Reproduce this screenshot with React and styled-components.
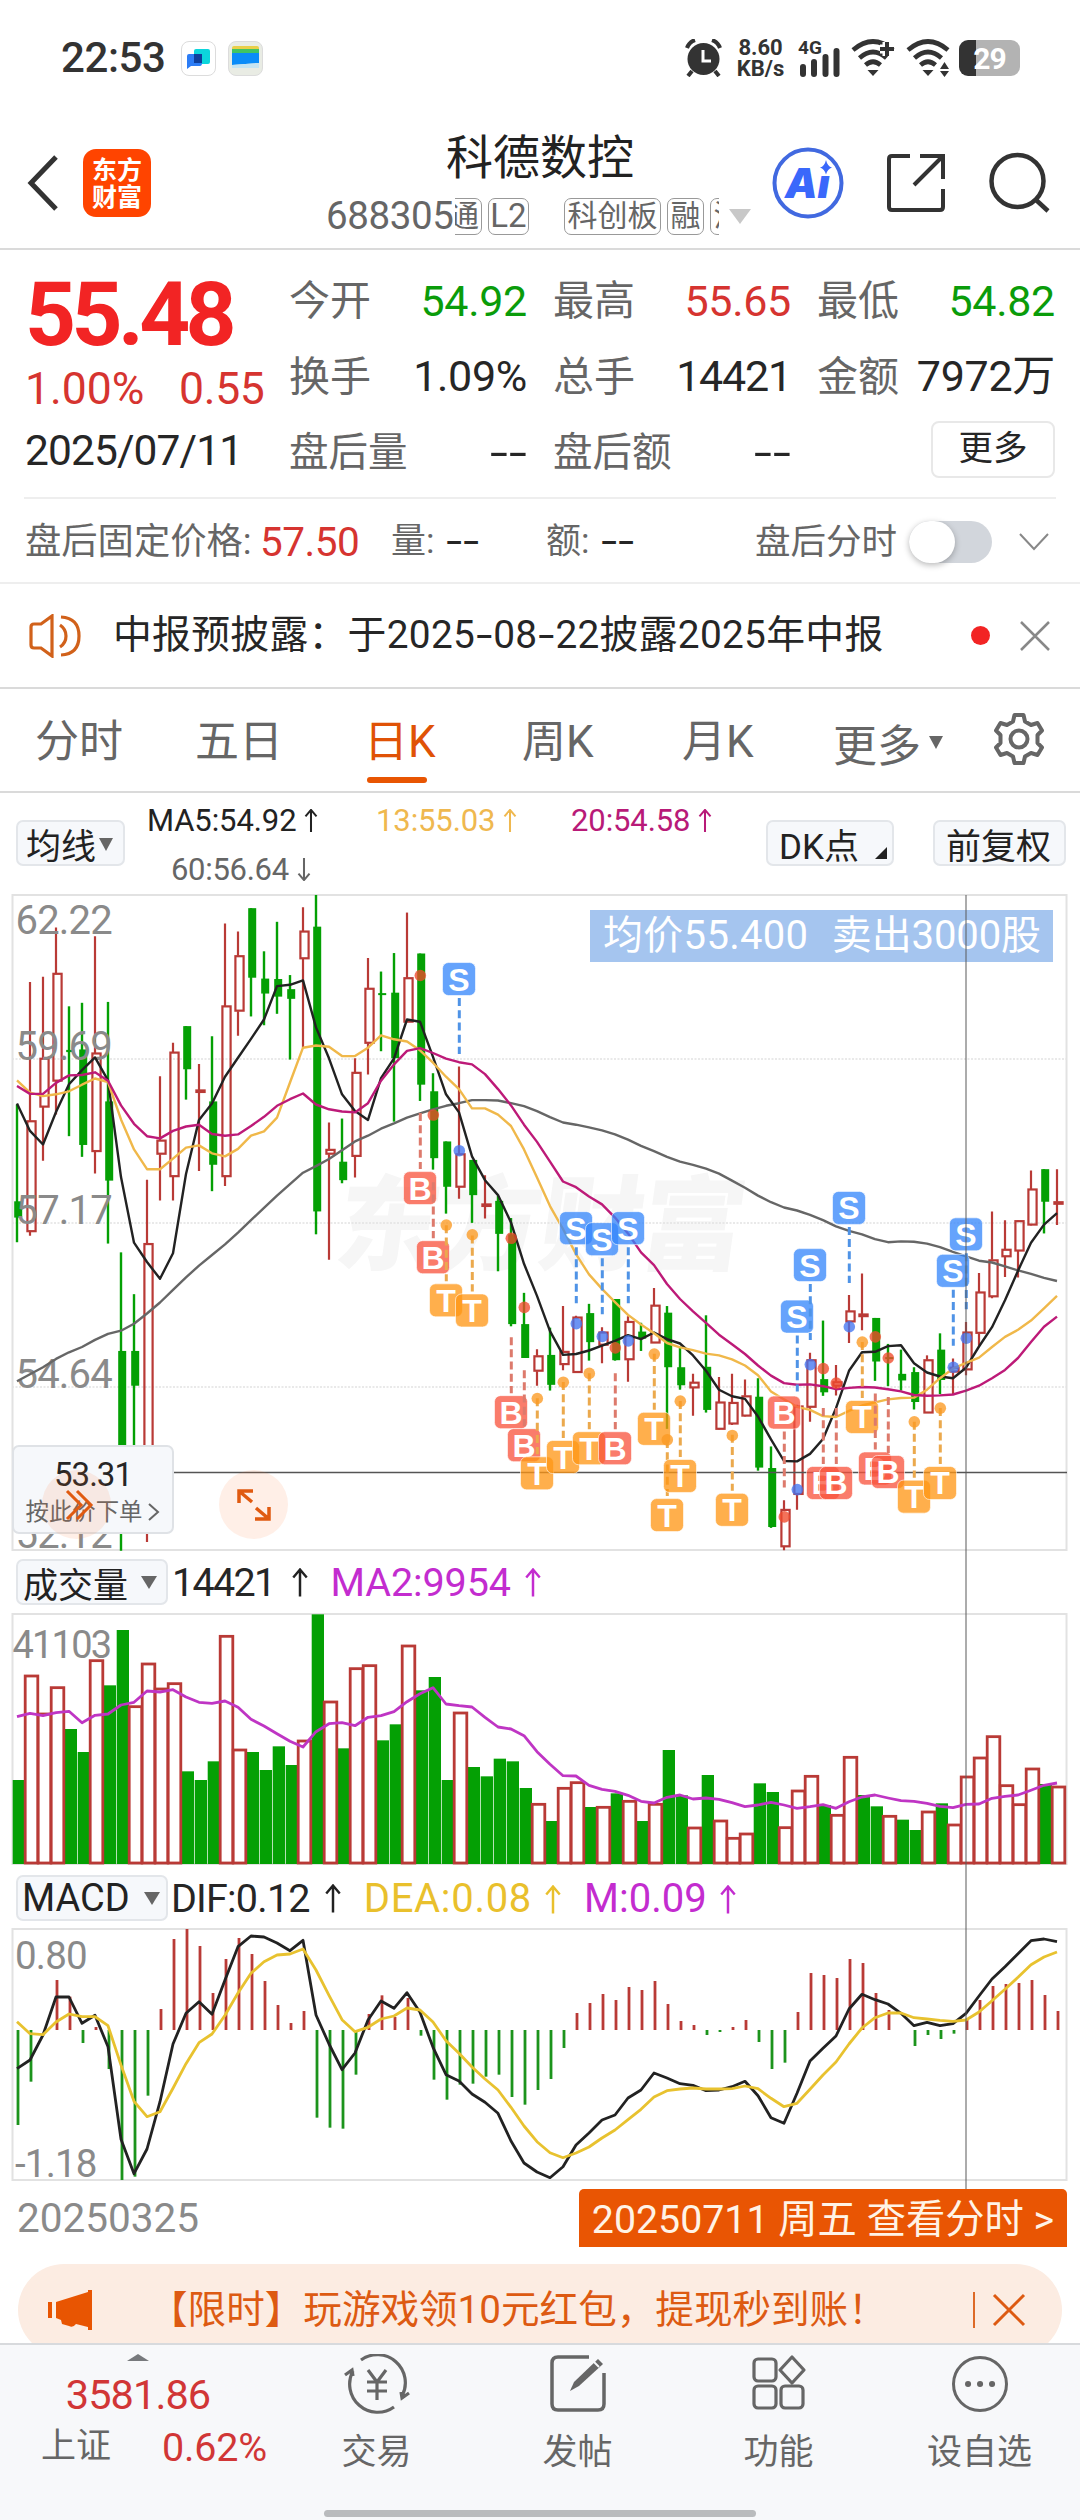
import React from 'react'
import styled, { createGlobalStyle } from 'styled-components'

const GlobalStyle = createGlobalStyle`
    * {
        box-sizing: border-box;
    }
    body {
        margin: 0;
        background: #fff;
        font-family: Roboto, "Noto Sans CJK SC", sans-serif;
        color: #222;
    }
    svg {
        display: block;
        flex: none;
    }
`
const Page = styled.div`
    width: 1080px;
    height: 2520px;
    display: flex;
    flex-direction: column;
    overflow: hidden;
    background: #fff;
`
const Text = styled.span`
    display: block;
    flex: none;
    white-space: nowrap;
    line-height: 1.2;
    font-size: ${p => p.$size || 36}px;
    font-weight: ${p => p.$weight || 400};
    color: ${p => p.$color || '#262626'};
    letter-spacing: ${p => p.$ls || 0}px;
    width: ${p => (p.$w ? p.$w + 'px' : 'auto')};
    margin: ${p => p.$m || '0'};
`
const Dash = styled.span`
    display: inline-block;
    margin: 0 3.5px;
    transform: scaleX(1.5);
`

/* status bar */
const StatusBar = styled.div`
    height: 117px;
    padding: 0 60px 1px 61px;
    display: flex;
    align-items: center;
`
const AppIcon = styled.div`
    width: 35px;
    height: 35px;
    margin-right: 12px;
    border: 1px solid #dcdcdc;
    border-radius: 8px;
    overflow: hidden;
    background: ${p => p.$bg || '#fff'};
`
const StatusRight = styled.div`
    margin-left: auto;
    display: flex;
    align-items: center;
`
const Speed = styled.div`
    width: 53px;
    margin: 0 11px 0 12px;
    font-size: 22px;
    line-height: 21px;
    font-weight: 700;
    text-align: center;
    color: #333;
`
const Battery = styled.div`
    width: 61px;
    height: 36px;
    margin-left: 7px;
    border-radius: 9px;
    display: flex;
    align-items: center;
    justify-content: center;
    background: linear-gradient(90deg, #333 17px, #b3b3b3 17px);
    color: #fff;
    font-size: 30px;
    font-weight: 700;
    letter-spacing: -1px;
`

/* header */
const Header = styled.div`
    height: 133px;
    padding: 0 29px 0 27px;
    display: flex;
    align-items: center;
    border-bottom: 2px solid #dadada;
`
const Brand = styled.div`
    width: 68px;
    height: 68px;
    margin-left: 24px;
    padding-top: 8px;
    border-radius: 13px;
    background: #ff4400;
    color: #fff;
    font-size: 25px;
    line-height: 27px;
    font-weight: 700;
    text-align: center;
`
const TitleBox = styled.div`
    width: 425px;
    margin-left: 176px;
    height: 133px;
    padding-top: 14px;
`
const Title = styled.div`
    width: 426px;
    font-size: 47px;
    line-height: 56px;
    text-align: center;
    color: #222;
`
const CodeRow = styled.div`
    height: 38px;
    margin: 11px 0 0 -1px;
    display: flex;
    align-items: center;
`
const TagStrip = styled.div`
    width: 264px;
    height: 37px;
    display: flex;
    overflow: hidden;
`
const Tag = styled.span`
    flex: none;
    height: 37px;
    width: ${p => p.$w}px;
    margin: 0 6px 0 ${p => p.$ml || 0}px;
    border: 1.5px solid #999;
    border-radius: 7px;
    text-align: center;
    font-size: ${p => p.$size || 30}px;
    line-height: 33px;
    color: #666;
    white-space: nowrap;
`
const Caret = styled.i`
    flex: none;
    border: ${p => p.$s || 7}px solid transparent;
    border-top: ${p => p.$h || 13}px solid ${p => p.$color || '#666'};
    border-bottom: 0;
    margin: ${p => p.$mt || 0}px 0 0 ${p => p.$ml || 0}px;
`

/* quote */
const Quote = styled.div`
    height: 249px;
    margin: 0 24px;
    display: flex;
    border-bottom: 2px solid #eee;
`
const QuoteLeft = styled.div`
    width: 265px;
    padding: 12px 0 0 1px;
`
const Price = styled.div`
    height: 106px;
    font-size: 89px;
    line-height: 106px;
    font-weight: 700;
    letter-spacing: -4.6px;
    color: #f22424;
`
const Change = styled.div`
    display: flex;
    height: 50px;
    margin-top: -5px;
`
const QuoteGrid = styled.div`
    padding-top: 14px;
    display: grid;
    grid-template-columns: 238px 238px 238px;
    grid-auto-rows: 75.5px;
    column-gap: 26px;
    width: 767px;
`
const Cell = styled.div`
    display: flex;
    justify-content: space-between;
    align-items: center;
`
const MoreButton = styled.div`
    width: 124px;
    height: 57px;
    margin: -6px 0 0 auto;
    border: 2px solid #e8e8e8;
    border-radius: 8px;
    text-align: center;
    font-size: 34.5px;
    line-height: 50px;
    color: #262626;
`
const AfterHours = styled.div`
    height: 85px;
    padding: 3px 27px 0 25px;
    display: flex;
    align-items: center;
    border-bottom: 2px solid #eee;
`
const Toggle = styled.div`
    width: 83px;
    height: 42px;
    margin-left: 12px;
    border-radius: 21px;
    background: #d2d6dc;
    display: flex;
    align-items: center;
    &::before {
        content: '';
        width: 46px;
        height: 42px;
        border-radius: 23px;
        background: #fff;
        box-shadow: 0 2px 6px rgba(0, 0, 0, 0.28);
    }
`
const Notice = styled.div`
    height: 105px;
    padding: 0 29px;
    display: flex;
    align-items: center;
    border-bottom: 2px solid #dadada;
`
const RedDot = styled.i`
    width: 19px;
    height: 19px;
    margin-left: auto;
    margin-right: 29px;
    border-radius: 50%;
    background: #f22424;
`

/* period tabs */
const Tabs = styled.div`
    height: 104px;
    padding: 0 34px 0 35px;
    display: flex;
    border-bottom: 2px solid #dadada;
`
const Tab = styled.div`
    width: ${p => p.$w}px;
    height: 101px;
    display: flex;
    flex-direction: column;
    font-size: 44px;
    line-height: 107px;
    color: ${p => (p.$active ? '#e05206' : '#666')};
    &::after {
        content: '';
        display: ${p => (p.$active ? 'block' : 'none')};
        width: 60px;
        height: 6px;
        margin: -19px 0 0 3px;
        border-radius: 3px;
        background: #e85502;
    }
`
const TabMore = styled.div`
    display: flex;
    align-items: center;
    width: 159px;
    height: 107px;
    font-size: 44px;
    color: #666;
`

/* chart area */
const Charts = styled.div`
    position: relative;
    height: 1471px;
`
const Legend = styled.div`
    height: 101px;
    padding: 0 16px;
    display: flex;
`
const Chip = styled.div`
    flex: none;
    width: ${p => p.$w}px;
    height: 46px;
    margin: ${p => p.$m || '0'};
    padding-left: ${p => p.$pl || 8}px;
    display: flex;
    align-items: center;
    background: #f6f8fb;
    border: 2px solid #e3e6ea;
    border-radius: 7px;
    font-size: ${p => p.$size || 35}px;
    color: #222;
    white-space: nowrap;
`
const Corner = styled.i`
    align-self: flex-end;
    margin: 0 5px 5px auto;
    border-left: 12px solid transparent;
    border-bottom: 12px solid #222;
`
const Averages = styled.div`
    width: 642px;
    padding: 3px 0 0 22px;
    display: grid;
    grid-template-columns: 229px 195px 200px;
    grid-auto-rows: 49px;
`
const Indicator = styled.div`
    display: flex;
    align-items: center;
    margin-left: ${p => p.$ml || 0}px;
    min-height: 46px;
`
const SubHeader = styled.div`
    height: ${p => p.$h}px;
    padding: ${p => p.$pt}px 16px 0;
    display: flex;
    align-items: flex-start;
`
const DateRow = styled.div`
    height: 82px;
    padding: 7px 13px 0 17px;
    display: flex;
    justify-content: space-between;
`
const DayButton = styled.div`
    width: 488px;
    height: 58px;
    border-radius: 5px 5px 0 0;
    background: #e95503;
    text-align: center;
    white-space: nowrap;
    font-size: 39.3px;
    line-height: 63px;
    color: #fff3e6;
`
const CrosshairV = styled.div`
    position: absolute;
    left: 965px;
    top: 102px;
    width: 2px;
    height: 1294px;
    background: rgba(90, 90, 90, 0.5);
`
const PriceTip = styled.div`
    position: absolute;
    left: 590px;
    top: 117px;
    width: 463px;
    height: 52px;
    background: #a5c5ef;
    display: flex;
    align-items: center;
    justify-content: space-between;
    padding: 0 12px 0 13px;
`
const OrderPop = styled.div`
    position: absolute;
    left: 12px;
    top: 652px;
    width: 162px;
    height: 89px;
    padding-top: 8px;
    background: #f6f8fb;
    border: 2px solid #dfe2e6;
    border-radius: 7px;
    display: flex;
    flex-direction: column;
    align-items: center;
`
const OrderLink = styled.div`
    display: flex;
    align-items: center;
    gap: 6px;
    font-size: 23.4px;
    line-height: 34px;
    color: #666;
`
const RoundButton = styled.div`
    position: absolute;
    left: ${p => p.$x}px;
    top: 677px;
    width: 69px;
    height: 69px;
    border-radius: 50%;
    background: rgba(255, 110, 40, 0.11);
    display: flex;
    align-items: center;
    justify-content: center;
`

/* banner + bottom nav */
const BannerWrap = styled.div`
    height: 79px;
    padding: 0 18px;
    overflow: hidden;
`
const Banner = styled.div`
    height: 92px;
    padding: 0 36px 0 29px;
    border-radius: 46px;
    background: #fcece2;
    display: flex;
    align-items: center;
`
const BannerLine = styled.i`
    width: 2px;
    height: 36px;
    margin: 0 17px 0 auto;
    background: #dd6a28;
`
const Nav = styled.div`
    position: relative;
    height: 177px;
    background: #f7f8fa;
    border-top: 2px solid #d8dadd;
    display: flex;
`
const IndexBox = styled.div`
    width: 276px;
    display: flex;
    flex-direction: column;
    align-items: center;
    padding-top: 9px;
`
const UpCaret = styled.i`
    border: 11px solid transparent;
    border-bottom: 7px solid #77797c;
    border-top: 0;
`
const IndexRow = styled.div`
    display: flex;
    width: 276px;
    padding: 0 9px 0 41px;
    justify-content: space-between;
    margin-top: 4px;
`
const NavItem = styled.div`
    width: 201px;
    display: flex;
    flex-direction: column;
    align-items: center;
    padding-top: 9px;
    gap: 16px;
    font-size: 35px;
    line-height: 46px;
    color: #666;
`
const HomeBar = styled.div`
    position: absolute;
    left: 324px;
    bottom: 3px;
    width: 432px;
    height: 7px;
    border-radius: 4px;
    background: #b9bbbd;
`

const RED = '#b93a36'
const GREEN = '#04a004'
const STEP = 13
const cx = i => 17 + STEP * i

// high, body top, body bottom, low, g = falling day
const candles = [
    [510, 730, 767, 823, 'g'], [232, 547, 799, 808], [220, 405, 516, 638], [108, 212, 457, 533],
    [287, 386, 391, 582, 'g'], [279, 385, 602, 629, 'g'], [128, 393, 617, 667], [277, 503, 683, 826, 'g'],
    [846, 1070, 1400, 1524, 'g'], [941, 1070, 1149, 1400, 'g'], [681, 826, 1400, 1504], [446, 591, 623, 728],
    [370, 391, 674, 728], [332, 332, 430, 499, 'g'], [418, 477, 481, 661], [355, 503, 647, 707, 'g'],
    [99, 286, 674, 695], [117, 172, 298, 354], [64, 64, 222, 310, 'g'], [162, 224, 258, 330, 'g'],
    [95, 225, 265, 304, 'g'], [216, 248, 270, 408, 'g'], [62, 116, 179, 381], [34, 106, 753, 805, 'g'],
    [551, 612, 623, 863], [542, 640, 682, 689, 'g'], [405, 437, 628, 676], [177, 246, 371, 442],
    [208, 257, 261, 389, 'g'], [166, 256, 405, 549, 'g'], [74, 222, 323, 323], [167, 167, 465, 502, 'g'],
    [439, 480, 632, 658, 'g'], [594, 594, 697, 758, 'g'], [424, 622, 698, 724], [636, 636, 716, 779, 'g'],
    [671, 736, 741, 769], [718, 729, 804, 889, 'g'], [768, 805, 1009, 1014, 'g'], [938, 1009, 1086, 1086, 'g'],
    [1066, 1081, 1116, 1149], [1017, 1079, 1147, 1160, 'g'], [968, 1071, 1101, 1114], [990, 993, 1119, 1120],
    [963, 984, 1050, 1092, 'g'], [1016, 1027, 1057, 1098], [952, 952, 1091, 1092, 'g'], [991, 1003, 1090, 1140],
    [1006, 1026, 1042, 1070, 'g'], [927, 966, 1052, 1052], [968, 983, 1107, 1247, 'g'], [1060, 1107, 1148, 1158, 'g'],
    [1122, 1141, 1154, 1217], [989, 1106, 1204, 1210, 'g'], [1129, 1186, 1248, 1249], [1122, 1187, 1236, 1238],
    [1135, 1172, 1218, 1219], [1132, 1174, 1335, 1342, 'g'], [1287, 1336, 1470, 1472, 'g'], [1409, 1430, 1515, 1523],
    [1192, 1195, 1396, 1431], [1074, 1090, 1198, 1231], [1001, 1134, 1164, 1172, 'g'], [1102, 1140, 1150, 1171],
    [943, 979, 1004, 1052], [894, 986, 992, 1023], [995, 995, 1094, 1138, 'g'], [1054, 1084, 1088, 1150, 'g'],
    [1067, 1122, 1137, 1160, 'g'], [1107, 1118, 1186, 1203, 'g'], [1080, 1090, 1211, 1211], [1030, 1067, 1136, 1168, 'g'],
    [1087, 1107, 1118, 1168], [1004, 1027, 1113, 1125], [893, 936, 1030, 1058], [753, 863, 947, 950],
    [773, 839, 856, 902], [773, 774, 843, 903], [660, 702, 784, 785], [657, 657, 731, 803, 'g'], [657, 731, 736, 784],
]
const ma5 = [508, 570, 601, 527, 464, 432, 403, 455, 675, 824, 868, 906, 848, 668, 545, 508, 447, 404, 361, 317, 241, 238, 228, 335, 405, 487, 525, 545, 450, 405, 317, 322, 402, 487, 528, 628, 682, 716, 778, 872, 945, 1025, 1079, 1077, 1069, 1058, 1047, 1034, 1043, 1028, 1043, 1053, 1080, 1115, 1158, 1173, 1179, 1219, 1271, 1320, 1321, 1304, 1270, 1200, 1115, 1073, 1072, 1059, 1057, 1098, 1119, 1128, 1132, 1108, 1060, 1016, 955, 888, 824, 783, 757]
const ma13 = [455, 483, 491, 487, 480, 465, 451, 459, 544, 612, 657, 657, 633, 608, 603, 621, 628, 611, 581, 571, 540, 460, 381, 376, 379, 400, 400, 381, 353, 362, 367, 387, 415, 447, 475, 519, 519, 533, 559, 612, 676, 741, 793, 850, 896, 929, 959, 988, 1010, 1030, 1052, 1062, 1068, 1076, 1080, 1089, 1103, 1125, 1162, 1180, 1197, 1204, 1218, 1220, 1206, 1194, 1187, 1180, 1177, 1176, 1158, 1132, 1110, 1097, 1085, 1061, 1038, 1022, 1001, 973, 945]
const ma20 = [468, 486, 486, 461, 444, 443, 437, 456, 512, 554, 582, 587, 570, 560, 556, 577, 581, 578, 559, 538, 513, 498, 485, 510, 521, 526, 528, 507, 456, 419, 388, 382, 393, 406, 414, 419, 441, 475, 512, 556, 595, 640, 685, 698, 719, 737, 767, 803, 846, 875, 918, 952, 980, 1006, 1033, 1055, 1077, 1103, 1126, 1143, 1147, 1146, 1150, 1157, 1154, 1152, 1153, 1157, 1162, 1170, 1172, 1171, 1169, 1160, 1149, 1132, 1113, 1086, 1050, 1015, 992]
const ma60 = [1139, 1123, 1107, 1088, 1073, 1061, 1045, 1031, 1024, 1008, 985, 960, 931, 903, 876, 852, 828, 801, 773, 745, 717, 691, 665, 650, 634, 614, 594, 581, 565, 553, 540, 530, 521, 513, 507, 500, 500, 501, 507, 514, 525, 539, 551, 556, 562, 569, 578, 590, 604, 616, 629, 640, 647, 656, 667, 683, 699, 717, 732, 744, 751, 761, 773, 787, 797, 805, 816, 823, 821, 822, 826, 834, 845, 855, 865, 869, 878, 887, 895, 904, 911]

// kind, day, badge, trade dot, 1 = stem runs below the badge
const marks = [
    ['B', 31, 700, 217], ['B', 32, 857, 534], ['T', 33, 955, 784], ['S', 34, 225, 615, 1], ['T', 35, 978, 806],
    ['B', 38, 1209, 814], ['B', 39, 1284, 971], ['T', 40, 1348, 1178], ['T', 42, 1311, 1141], ['S', 43, 791, 1008, 1],
    ['T', 44, 1291, 1121], ['S', 45, 816, 1037, 1], ['B', 46, 1291, 1063], ['S', 47, 791, 1047, 1], ['T', 49, 1247, 1077],
    ['T', 50, 1443, 1272], ['T', 51, 1354, 1184], ['T', 55, 1431, 1262], ['B', 59, 1210, 1447, 1], ['S', 60, 992, 1385, 1],
    ['S', 61, 875, 1101, 1], ['B', 62, 1370, 1110], ['B', 63, 1370, 1143], ['S', 64, 745, 1015, 1], ['T', 65, 1220, 1050],
    ['B', 66, 1337, 1038], ['B', 67, 1345, 1086], ['T', 69, 1401, 1231], ['T', 71, 1370, 1200], ['S', 72, 888, 1107, 1],
    ['S', 73, 805, 1041, 1],
]
const markColor = {
    S: { fill: '#3486fb', line: '#4f93e6', dot: '#4274f0' },
    B: { fill: '#f9533d', line: '#dd7a6c', dot: '#ef4a2c' },
    T: { fill: '#ff9614', line: '#eba94d', dot: '#fb9a22' },
}

// negative = falling day
const volume = [-690, 378, 492, 413, -537, -606, 332, -406, -240, 470, 342, 417, 401, -664, -690, -634, 259, 600, -606, -660, -589, -645, 573, -193, 456, -595, 356, 347, -571, -523, 288, -421, -381, -690, 489, -651, -679, -626, -634, -714, 763, -813, 715, 698, -771, 772, -730, 754, -813, 763, -600, -736, 834, -675, 813, 865, 852, -700, -726, 833, 723, 679, -765, 796, 622, -735, -769, 799, -809, -840, 786, -760, 825, 681, 624, 560, 707, 764, 657, -702, 711]
const volumeMa = [500, 490, 497, 488, 484, 518, 496, 492, 465, 457, 423, 426, 419, 441, 457, 460, 453, 472, 508, 528, 551, 574, 591, 545, 521, 518, 527, 502, 497, 485, 455, 431, 413, 462, 467, 471, 502, 531, 537, 557, 605, 643, 677, 678, 706, 718, 724, 736, 754, 759, 742, 735, 747, 744, 748, 758, 770, 765, 757, 765, 775, 770, 764, 775, 755, 741, 735, 744, 752, 754, 760, 769, 773, 763, 762, 745, 739, 735, 721, 706, 699]

const macd = [765, 635, 480, 330, 380, 519, 471, 597, 930, 920, 677, 417, 207, 177, 228, 369, 267, 204, 252, 333, 405, 459, 423, 743, 773, 776, 614, 432, 376, 441, 384, 497, 629, 689, 644, 641, 620, 614, 681, 704, 660, 627, 534, 429, 399, 372, 390, 351, 360, 333, 402, 453, 465, 495, 486, 471, 450, 516, 597, 578, 426, 309, 315, 324, 267, 279, 369, 420, 480, 528, 495, 507, 491, 447, 390, 348, 342, 339, 330, 375, 423]
const dif = [596, 570, 495, 381, 381, 460, 436, 530, 808, 911, 837, 695, 522, 430, 395, 433, 330, 230, 198, 201, 219, 242, 211, 435, 522, 599, 549, 450, 393, 415, 368, 427, 532, 614, 633, 672, 697, 730, 813, 879, 906, 923, 890, 825, 789, 750, 735, 684, 660, 609, 624, 641, 646, 662, 660, 650, 634, 677, 743, 760, 670, 573, 535, 498, 417, 373, 389, 402, 430, 467, 457, 467, 461, 430, 378, 327, 290, 251, 212, 207, 215]
const dea = [455, 491, 494, 456, 432, 440, 440, 467, 585, 694, 740, 725, 655, 581, 518, 492, 436, 369, 310, 275, 255, 252, 237, 300, 376, 449, 485, 472, 447, 438, 414, 420, 456, 512, 550, 591, 627, 660, 712, 768, 815, 848, 863, 849, 831, 804, 780, 749, 718, 681, 662, 657, 654, 657, 657, 656, 648, 656, 685, 710, 700, 658, 615, 576, 522, 474, 443, 429, 429, 443, 447, 451, 454, 450, 426, 392, 358, 322, 284, 261, 246]

const priceY = v => v / 2.272 - 14
const volY = v => v / 3 - 63
const macdY = v => v / 3 - 58

const Line = ({ data, y, color, width = 2.4 }) => (
    <polyline
        points={data.map((v, i) => `${cx(i)},${y(v).toFixed(1)}`).join(' ')}
        fill="none"
        stroke={color}
        strokeWidth={width}
        strokeLinejoin="round"
    />
)

const ArrowSvg = styled.svg`
    margin-left: ${p => p.$ml}px;
`
const Arrow = ({ color, down, w = 16, h = 25, ml = 6 }) => (
    <ArrowSvg $ml={ml} width={w} height={h} viewBox="0 0 16 25" fill="none" stroke={color} strokeWidth="2.2">
        <path d={down ? 'M8 0V24M2 17l6 7 6-7' : 'M8 25V1M2 8l6-7 6 7'} />
    </ArrowSvg>
)

function PriceChart() {
    return (
        <svg width="1080" height="657" fontFamily="Roboto, 'Noto Sans CJK SC', sans-serif">
            <text x="336" y="368" fontSize="103" fontWeight="900" fill="#f6f6f6" textLength="408" transform="skewX(-8) translate(48 0)">东方财富</text>
            <rect x="12.5" y="1" width="1054" height="655" fill="none" stroke="#e2e2e2" strokeWidth="2" />
            {[165, 329, 493].map(y => (
                <line key={y} x1="12" x2="1067" y1={y} y2={y} stroke="#e2e2e2" strokeWidth="1.5" strokeDasharray="2 1.5" />
            ))}
            {candles.map(([hi, top, bottom, low, g], i) => {
                const x = cx(i)
                const t = priceY(top)
                const h = priceY(bottom) - t
                if (g) {
                    return (
                        <g key={i} fill={GREEN}>
                            <rect x={x - 1.2} y={priceY(hi)} width="2.4" height={priceY(low) - priceY(hi)} />
                            <rect x={x - 2.8} y={t} width="8" height={Math.max(h, 2)} />
                        </g>
                    )
                }
                return (
                    <g key={i} stroke={RED} strokeWidth="2.2" fill="none">
                        <path d={`M${x} ${priceY(hi)}V${t}M${x} ${t + h}V${priceY(low)}`} />
                        <rect x={x - 2.6} y={t + 0.5} width="8.2" height={Math.max(h - 1, 1.5)} />
                    </g>
                )
            })}
            <g fontSize="40" fill="#8a8a8a" letterSpacing="-0.8">
                <text x="15.500" y="40">62.22</text>
                <text x="15.500" y="166">59.69</text>
                <text x="15.500" y="330">57.17</text>
                <text x="15.500" y="494">54.64</text>
                <text x="15.500" y="654">52.12</text>
            </g>
            <Line data={ma60} y={priceY} color="#666" />
            <Line data={ma5} y={priceY} color="#222" />
            <Line data={ma13} y={priceY} color="#f0b84a" />
            <Line data={ma20} y={priceY} color="#bd1a78" />
            <line x1="12" x2="1067" y1="578.5" y2="578.5" stroke="#555" strokeWidth="1.3" />
            {marks.map(([kind, day, badge, dot, below], i) => {
                const c = markColor[kind]
                const x = cx(day)
                const y = priceY(badge)
                const start = below ? y + 19 : y - 75
                return (
                    <g key={i}>
                        <line x1={x + 0.3} x2={x + 0.3} y1={start} y2={start + 56} stroke={c.line} strokeWidth="3" strokeDasharray="8 4.2" />
                        <circle cx={x + 0.3} cy={priceY(dot)} r="5.8" fill={c.dot} opacity="0.78" />
                        <rect x={x - 16.5} y={y - 16.5} width="33" height="33" rx="6" fill={c.fill} fillOpacity="0.76" stroke="#fff" strokeOpacity="0.6" />
                        <text x={x} y={y + 11.5} fontSize="32" fontWeight="700" fontFamily="Liberation Sans, sans-serif" fill="#fff" textAnchor="middle">{kind}</text>
                    </g>
                )
            })}
        </svg>
    )
}

function VolumeChart() {
    return (
        <svg width="1080" height="252">
            <rect x="12.5" y="1" width="1054" height="250" fill="none" stroke="#e2e2e2" strokeWidth="2" />
            {volume.map((v, i) =>
                v < 0 ? (
                    <rect key={i} x={cx(i) - 4.3} y={volY(-v)} width="12.3" height={251 - volY(-v)} fill={GREEN} />
                ) : null
            )}
            {volume.map((v, i) =>
                v > 0 ? (
                    <rect key={i} x={cx(i) - 4.8} y={volY(v)} width="12.6" height={250 - volY(v)} fill="#fff" stroke={RED} strokeWidth="2.8" />
                ) : null
            )}
            <text x="12.500" y="45" fontFamily="Roboto" fontSize="38" letterSpacing="-1.8" fill="#8a8a8a">41103</text>
            <Line data={volumeMa} y={volY} color="#bf35c4" width={2.8} />
        </svg>
    )
}

function MacdChart() {
    return (
        <svg width="1080" height="254">
            <rect x="12.5" y="1" width="1054" height="251" fill="none" stroke="#e2e2e2" strokeWidth="2" />
            <g fontFamily="Roboto" fontSize="38.5" letterSpacing="-0.8" fill="#8a8a8a">
                <text x="15" y="41">0.80</text>
                <text x="15" y="249">-1.18</text>
            </g>
            {macd.map((v, i) => (
                <line key={i} x1={cx(i) + 1} x2={cx(i) + 1} y1="102" y2={macdY(v)} stroke={v < 480 ? RED : '#1c941c'} strokeWidth="2.8" />
            ))}
            <Line data={dif} y={macdY} color="#222" width={2.8} />
            <Line data={dea} y={macdY} color="#e8c22f" width={2.8} />
        </svg>
    )
}

const WifiSvg = styled.svg`
    margin-left: 9px;
`
const Wifi = ({ children }) => (
    <WifiSvg width="46" height="38" viewBox="0 0 46 38" fill="none" stroke="#333" strokeWidth="4.600">
        <path d="M2 11Q22-6 42 11M8.500 19Q22 7 35.500 19M14.500 26Q22 19.500 29.500 26" />
        <path d="M16.500 31h11L22 37z" fill="#333" stroke="none" />
        {children}
    </WifiSvg>
)

function Status() {
    return (
        <StatusBar>
            <Text $size={42} $weight={500} $ls={-0.4} $w={120} $color="#333">22:53</Text>
            <AppIcon>
                <svg width="33" height="33">
                    <rect x="12" y="7" width="16" height="15" rx="2" fill="#0cd6dc" />
                    <path d="M5 14q0-2 2-2h13v9q0 3-2 3H9l-4 3z" fill="#2c7df6" />
                    <rect x="12" y="12" width="8" height="9" fill="#0d3f9c" />
                </svg>
            </AppIcon>
            <AppIcon $bg="#e9ece4">
                <svg width="33" height="33">
                    <rect x="3" y="4" width="27" height="6" rx="2" fill="#e9cf49" />
                    <rect x="3" y="7" width="27" height="6" fill="#41c463" />
                    <path d="M3 11h27v10l-14 1-13 1z" fill="#0b8cf8" />
                    <path d="M3 23l27-2v5H3z" fill="#c5e4f2" />
                </svg>
            </AppIcon>
            <StatusRight>
                <svg width="37" height="38" viewBox="0 0 37 38">
                    <circle cx="18.500" cy="20" r="16" fill="#333" />
                    <path d="M2 9q2-6 8-8M35 9q-2-6-8-8M7 32l-4 5M30 32l4 5" stroke="#333" strokeWidth="4" fill="none" />
                    <path d="M18 11v11h8" stroke="#fff" strokeWidth="3" fill="none" />
                </svg>
                <Speed>8.60<br />KB/s</Speed>
                <svg width="44" height="40" viewBox="0 0 44 40">
                    <text x="0" y="16" fontFamily="Roboto" fontWeight="700" fontSize="19" fill="#333">4G</text>
                    <path d="M5 29v7M16 24v12M27.500 19v17M38.500 13v23" stroke="#333" strokeWidth="6" strokeLinecap="round" />
                </svg>
                <Wifi><path d="M36 3v14M29 10h14" stroke="#fff" strokeWidth="9" /><path d="M36 3v14M29 10h14" strokeWidth="4" /></Wifi>
                <Wifi><path d="M34 30l4.500-7 4.500 7zM34 32l4.500 6 4.500-6z" fill="#333" stroke="none" /></Wifi>
                <Battery>29</Battery>
            </StatusRight>
        </StatusBar>
    )
}

const Actions = styled.div`
    display: flex;
    align-items: center;
    gap: 42px;
    margin-left: 20px;
`

function TopHeader() {
    return (
        <Header>
            <svg width="32" height="56" fill="none" stroke="#333" strokeWidth="5">
                <path d="M29 2L4 28l25 26" />
            </svg>
            <Brand>东方<br />财富</Brand>
            <TitleBox>
                <Title>科德数控</Title>
                <CodeRow>
                    <Text $size={38.5} $ls={-0.4} $w={129} $color="#666">688305</Text>
                    <TagStrip>
                        <Tag $w={36} $ml={-9}>通</Tag>
                        <Tag $w={41} $size={33}>L2</Tag>
                        <Tag $w={97} $ml={29}>科创板</Tag>
                        <Tag $w={37}>融</Tag>
                        <Tag $w={37}>沪</Tag>
                    </TagStrip>
                    <Caret $s={11} $h={15} $ml={10} $color="#c8c8c8" />
                </CodeRow>
            </TitleBox>
            <Actions>
                <svg width="72" height="72" viewBox="0 0 72 72">
                    <circle cx="36" cy="36" r="33.500" fill="none" stroke="#4169e0" strokeWidth="4" />
                    <text x="13" y="51" fontFamily="Inter, Roboto" fontSize="41" fontWeight="900" fontStyle="italic" fill="#3a68fb">Aı</text>
                    <path d="M54 13q1.500 6.500 6 7.500-4.500 1.500-6 7-1.500-5.500-6-7 4.500-1 6-7.500z" fill="#3a68fb" />
                </svg>
                <svg width="60" height="60" viewBox="0 0 60 60" fill="none" stroke="#333" strokeWidth="4">
                    <path d="M24 3H6Q3 3 3 6v48q0 3 3 3h48q3 0 3-3V36M34 3h23v23M56 4L28 32" />
                </svg>
                <svg width="62" height="62" viewBox="0 0 62 62" fill="none" stroke="#333" strokeWidth="4.500">
                    <circle cx="29.500" cy="29" r="26" />
                    <path d="M47 47l13 12" />
                </svg>
            </Actions>
        </Header>
    )
}

const quotes = [
    ['今开', '54.92', '#0a9c0a'], ['最高', '55.65', '#d63430'], ['最低', '54.82', '#0a9c0a'],
    ['换手', '1.09%'], ['总手', '14421'], ['金额', '7972万'],
    ['盘后量', ''], ['盘后额', ''],
]
const Empty = () => <><Dash>-</Dash><Dash>-</Dash></>

function QuotePanel() {
    return (
        <>
            <Quote>
                <QuoteLeft>
                    <Price>55.48</Price>
                    <Change>
                        <Text $size={44.5} $ls={0} $w={154} $color="#d63430">1.00%</Text>
                        <Text $size={44.5} $ls={-0.3} $color="#d63430">0.55</Text>
                    </Change>
                    <Text $size={42.5} $ls={-0.9} $m="12px 0 0">2025/07/11</Text>
                </QuoteLeft>
                <QuoteGrid>
                    {quotes.map(([name, value, color]) => (
                        <Cell key={name}>
                            <Text $size={name.length > 2 ? 39.5 : 41} $color="#666">{name}</Text>
                            <Text $size={43} $ls={value === '14421' ? -1.2 : -0.3} $color={color}>{value || <Empty />}</Text>
                        </Cell>
                    ))}
                    <Cell><MoreButton>更多</MoreButton></Cell>
                </QuoteGrid>
            </Quote>
            <AfterHours>
                <Text $size={36.3} $w={235} $color="#666">盘后固定价格:</Text>
                <Text $size={40.5} $ls={-0.5} $w={131} $color="#d63430">57.50</Text>
                <Text $size={35} $w={54} $color="#666">量:</Text>
                <Text $size={38} $w={101}><Empty /></Text>
                <Text $size={35} $w={54} $color="#666">额:</Text>
                <Text $size={38} $w={155}><Empty /></Text>
                <Text $size={35.5} $color="#666">盘后分时</Text>
                <Toggle />
                <svg width="57" height="20" viewBox="-27 0 57 20" fill="none" stroke="#888" strokeWidth="2">
                    <path d="M1 2l14 15L29 2" />
                </svg>
            </AfterHours>
            <Notice>
                <svg width="52" height="44" viewBox="0 0 52 44" fill="none" stroke="#d1611a" strokeWidth="3.200">
                    <path d="M2 13q0-3 3-3h7L23 2v40L12 34H5q-3 0-3-3zM31 11q6 4 6 11t-6 11M32 3q18 1 18 19T32 41" />
                </svg>
                <Text $size={38.8} $ls={0.3} $m="0 0 0 32px">
                    中报预披露：于2025<Dash>-</Dash>08<Dash>-</Dash>22披露2025年中报
                </Text>
                <RedDot />
                <svg width="32" height="30" fill="none" stroke="#888" strokeWidth="2.500"><path d="M2 1l28 28M30 1L2 29" /></svg>
            </Notice>
        </>
    )
}

const GearSvg = styled.svg`
    margin: 23px 0 0 auto;
`

function PeriodTabs() {
    return (
        <Tabs>
            <Tab $w={160}>分时</Tab>
            <Tab $w={169}>五日</Tab>
            <Tab $w={158} $active>日K</Tab>
            <Tab $w={160}>周K</Tab>
            <Tab $w={151}>月K</Tab>
            <TabMore>更多<Caret $ml={8} /></TabMore>
            <GearSvg width="54" height="54" viewBox="0 0 54 54" fill="none" stroke="#666" strokeWidth="4" strokeLinejoin="round">
                <path d="M22.500 3h9l1.500 6.500 6 3.500 6.500-2L50 18.500 45.500 23v8l4.500 4.500-4.500 7.500-6.500-2-6 3.500-1.500 6.500h-9L21 44.500 15 41l-6.500 2L4 35.500 8.500 31v-8L4 18.500 8.500 11l6.500 2 6-3.500z" />
                <circle cx="27" cy="27" r="8.500" />
            </GearSvg>
        </Tabs>
    )
}

function ChartPanel() {
    const averages = [
        ['MA5:54.92', '#222'], ['13:55.03', '#efb84f'], ['20:54.58', '#b81a78'],
    ]
    return (
        <Charts>
            <Legend>
                <Chip $w={109} $m="27px 0 0">均线<Caret $ml={3} $mt={3} /></Chip>
                <Averages>
                    {averages.map(([label, color]) => (
                        <Indicator key={label}>
                            <Text $size={31} $ls={-0.1} $color={color}>{label}</Text>
                            <Arrow color={color} h={23} ml={7} />
                        </Indicator>
                    ))}
                    <Indicator $ml={24}>
                        <Text $size={31} $ls={-0.3} $color="#666">60:56.64</Text>
                        <Arrow color="#666" down h={23} ml={7} />
                    </Indicator>
                </Averages>
                <Chip $w={128} $m="27px 0 0 -1px" $pl={11}>DK点<Corner /></Chip>
                <Chip $w={133} $m="27px 0 0 39px" $pl={11}>前复权</Chip>
            </Legend>
            <PriceChart />
            <SubHeader $h={62} $pt={8}>
                <Chip $w={152} $pl={5}>成交量<Caret $ml={13} $s={8} /></Chip>
                <Indicator $ml={4}>
                    <Text $size={39.5} $ls={-1.7}>14421</Text>
                    <Arrow color="#222" w={18} h={29} ml={16} />
                </Indicator>
                <Indicator $ml={22}>
                    <Text $size={39.5} $ls={-0.1} $color="#c32ccf">MA2:9954</Text>
                    <Arrow color="#c32ccf" w={18} h={29} ml={13} />
                </Indicator>
            </SubHeader>
            <VolumeChart />
            <SubHeader $h={63} $pt={10}>
                <Chip $w={152} $pl={4} $size={38}>MACD<Caret $ml={14} $s={8} /></Chip>
                <Indicator $ml={3}>
                    <Text $size={39.5} $ls={-0.8}>DIF:0.12</Text>
                    <Arrow color="#222" w={18} h={29} ml={14} />
                </Indicator>
                <Indicator $ml={22}>
                    <Text $size={40} $ls={0.7} $color="#e9c02c">DEA:0.08</Text>
                    <Arrow color="#e9c02c" w={18} h={29} ml={12} />
                </Indicator>
                <Indicator $ml={22}>
                    <Text $size={40} $ls={0} $color="#c32ccf">M:0.09</Text>
                    <Arrow color="#c32ccf" w={18} h={29} ml={12} />
                </Indicator>
            </SubHeader>
            <MacdChart />
            <DateRow>
                <Text $size={40.5} $color="#8a8a8a" $m="5px 0 0">20250325</Text>
                <DayButton>20250711 周五 查看分时 &gt;</DayButton>
            </DateRow>
            <PriceTip>
                <Text $size={40} $ls={0.3} $color="#fff">均价55.400</Text>
                <Text $size={40} $ls={-0.1} $color="#fff">卖出3000股</Text>
            </PriceTip>
            <CrosshairV />
            <OrderPop>
                <Text $size={33} $ls={-1}>53.31</Text>
                <OrderLink>
                    按此价下单
                    <svg width="12" height="18" fill="none" stroke="#666" strokeWidth="2"><path d="M1 1l9 8-9 8" /></svg>
                </OrderLink>
            </OrderPop>
            <RoundButton $x={42}>
                <svg width="34" height="32" viewBox="-4 0 34 32" fill="none" stroke="#e05a10" strokeWidth="3">
                    <path d="M3 2l14 14L3 30M13 2l14 14-14 14" />
                </svg>
            </RoundButton>
            <RoundButton $x={219}>
                <svg width="34" height="34" fill="none" stroke="#e05a10" strokeWidth="3.500">
                    <path d="M2 15V3h14M2 3l13 11M32 19v12H18M32 31L19 20" />
                </svg>
            </RoundButton>
        </Charts>
    )
}

function PromoBanner() {
    return (
        <BannerWrap>
            <Banner>
                <svg width="48" height="40" viewBox="0 0 48 40" fill="#e85502">
                    <path d="M1 12h4v16H1zM9 12L41 2V0h4v40h-4v-3l-12-3q-3 4-7 2l-7-2-1-4-5-2z" />
                </svg>
                <Text $size={38.6} $color="#dd5a12" $m="0 0 0 54px">【限时】玩游戏领10元红包，提现秒到账！</Text>
                <BannerLine />
                <svg width="34" height="34" fill="none" stroke="#dd5a12" strokeWidth="3"><path d="M2 2l30 30M32 2L2 32" /></svg>
            </Banner>
        </BannerWrap>
    )
}

function BottomNav() {
    return (
        <Nav>
            <IndexBox>
                <UpCaret />
                <Text $size={41.5} $ls={-0.9} $color="#d13636" $m="9px 0 0">3581.86</Text>
                <IndexRow>
                    <Text $size={35} $color="#666" $m="2px 0 0">上证</Text>
                    <Text $size={39.5} $ls={-0.2} $color="#d13636">0.62%</Text>
                </IndexRow>
            </IndexBox>
            <NavItem>
                <svg width="66" height="60" viewBox="0 0 66 60" fill="none" stroke="#666" strokeWidth="3.200">
                    <path d="M17 6A28 28 0 0 1 58 42M50 53A28 28 0 0 1 9 17M1 21l7-5 1 6M65 39l-7 5-1-6" />
                    <path d="M24 16l9 12 9-12M33 28v18M23 28h20M23 37h20" />
                </svg>
                交易
            </NavItem>
            <NavItem>
                <svg width="58" height="60" viewBox="0 0 58 60" fill="none" stroke="#666" strokeWidth="3.500">
                    <path d="M40 3H9Q3 3 3 9v41q0 6 6 6h40q6 0 6-6V19" />
                    <path d="M21 37l4-9L49 5l5 5-24 22z" fill="#666" stroke="none" />
                    <path d="M44 7l6 6" stroke="#f7f8fa" strokeWidth="2" />
                </svg>
                发帖
            </NavItem>
            <NavItem>
                <svg width="56" height="60" viewBox="0 0 56 60" fill="none" stroke="#666" strokeWidth="3.200" strokeLinejoin="round">
                    <rect x="3" y="5" width="22" height="22" rx="4" />
                    <rect x="3" y="32" width="22" height="22" rx="4" />
                    <rect x="30" y="32" width="22" height="22" rx="4" />
                    <path d="M41 3l12 13-12 13-12-13z" />
                </svg>
                功能
            </NavItem>
            <NavItem>
                <svg width="58" height="60" viewBox="0 0 58 60">
                    <circle cx="29" cy="30" r="26.500" fill="none" stroke="#666" strokeWidth="3" />
                    <path d="M17 30h.1M29 30h.1M41 30h.1" stroke="#666" strokeWidth="6" strokeLinecap="round" />
                </svg>
                设自选
            </NavItem>
            <HomeBar />
        </Nav>
    )
}

function App() {
    return (
        <Page>
            <GlobalStyle />
            <Status />
            <TopHeader />
            <QuotePanel />
            <PeriodTabs />
            <ChartPanel />
            <PromoBanner />
            <BottomNav />
        </Page>
    )
}

export default App
